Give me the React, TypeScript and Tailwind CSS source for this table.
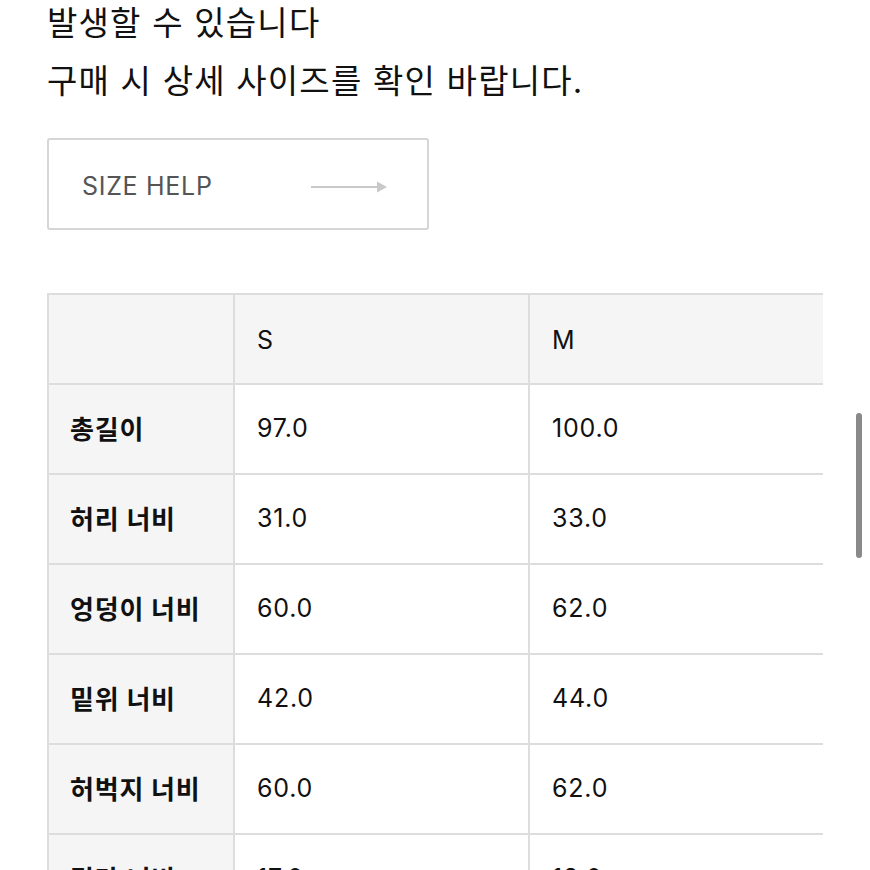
const rows: [string, string, string][] = [
  ["총길이", "97.0", "100.0"],
  ["허리 너비", "31.0", "33.0"],
  ["엉덩이 너비", "60.0", "62.0"],
  ["밑위 너비", "42.0", "44.0"],
  ["허벅지 너비", "60.0", "62.0"],
  ["밑단 너비", "17.0", "18.0"],
];

function ArrowRight() {
  return (
    <svg width="78" height="14" viewBox="0 0 78 14" className="shrink-0">
      <line x1="0" y1="7" x2="68" y2="7" stroke="#c9c9c9" strokeWidth="2" />
      <path d="M66 1.5 L76 7 L66 12.5 Z" fill="#c9c9c9" />
    </svg>
  );
}

export default function App() {
  return (
    <div
      className="relative h-[870px] w-[870px] overflow-hidden bg-white text-[#111]"
      style={{ fontFamily: '"Inter", "Noto Sans CJK KR", sans-serif' }}
    >
      <div className="px-[47px] pt-0">
        <p className="-mt-[6px] text-[33px] leading-[58px] tracking-[1.2px]">
          발생할 수 있습니다
          <br />
          구매 시 상세 사이즈를 확인 바랍니다.
        </p>

        <button className="mt-[28px] flex h-[92px] w-[382px] items-center justify-between rounded-[3px] border-2 border-[#d6d6d6] pl-[33px] pr-[38px] pt-[6px] text-left">
          <span className="text-[25px] tracking-[0.7px] text-[#555]">SIZE HELP</span>
          <ArrowRight />
        </button>

        <div className="mt-[63px] grid w-[776px] grid-cols-[184px_293px_293px] gap-[2px] bg-[#dddddd] p-[2px] text-[25px] tracking-[0.8px]">
          <div className="h-[88px] bg-[#f5f5f5]" />
          <div className="flex h-[88px] items-center bg-[#f5f5f5] pl-[22px] pt-[4px]">S</div>
          <div className="flex h-[88px] items-center bg-[#f5f5f5] pl-[22px] pt-[4px]">M</div>
          {rows.map(([label, s, m]) => (
            <div key={label} className="contents">
              <div className="flex h-[88px] items-center bg-[#f5f5f5] pl-[21px] text-[26px] font-bold">
                {label}
              </div>
              <div className="flex h-[88px] items-center bg-white pl-[22px]">{s}</div>
              <div className="flex h-[88px] items-center bg-white pl-[22px]">{m}</div>
            </div>
          ))}
        </div>
      </div>

      <div className="absolute left-[856px] top-[413px] h-[145px] w-[6px] rounded-full bg-[#8a8a8a]" />
    </div>
  );
}
